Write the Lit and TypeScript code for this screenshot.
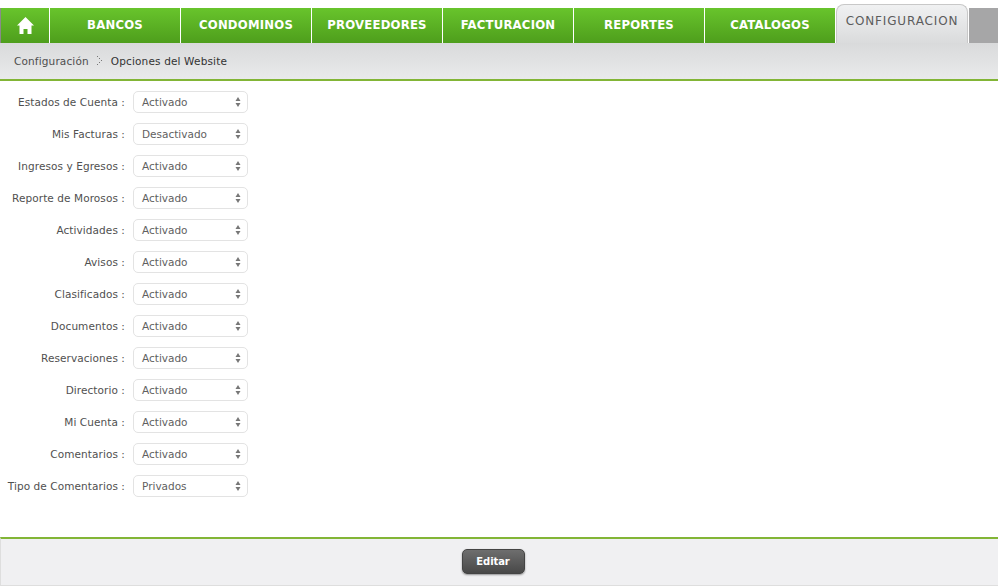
import { LitElement, html, css } from "lit";
import { customElement } from "lit/decorators.js";

const tabs = ["BANCOS", "CONDOMINOS", "PROVEEDORES", "FACTURACION", "REPORTES", "CATALOGOS"];
const rows: [string, string][] = [
  ["Estados de Cuenta", "Activado"],
  ["Mis Facturas", "Desactivado"],
  ["Ingresos y Egresos", "Activado"],
  ["Reporte de Morosos", "Activado"],
  ["Actividades", "Activado"],
  ["Avisos", "Activado"],
  ["Clasificados", "Activado"],
  ["Documentos", "Activado"],
  ["Reservaciones", "Activado"],
  ["Directorio", "Activado"],
  ["Mi Cuenta", "Activado"],
  ["Comentarios", "Activado"],
  ["Tipo de Comentarios", "Privados"],
];

@customElement("app-root")
export class AppRoot extends LitElement {
  static styles = css`
    :host { display: block; width: 998px; height: 586px; overflow: hidden; background: #fff;
      font-family: "DejaVu Sans", sans-serif; font-size: 10.5px; color: #4a4a4a; }
    .nav { display: flex; height: 39px; padding-top: 4px; box-sizing: content-box; align-items: flex-end; }
    .tab { box-sizing: border-box; height: 35px; width: 131px; display: flex; align-items: center; justify-content: center;
      background: linear-gradient(#68c42c, #4e9e1c); color: #fff; font-weight: 700; font-size: 11.7px; letter-spacing: 0.2px;
      border-left: 1px solid #fff; flex: none; padding-bottom: 2px; }
    .home { width: 49px; border-left: 1px solid #8a8a8a; padding-bottom: 0; }
    .active { width: 132px; height: 39px; margin-left: 1px; border: 1px solid #c8c8c8; border-bottom: none; border-radius: 8px 8px 0 0;
      background: linear-gradient(#f0f1f2, #dadbdc); color: #5c5c5c; font-weight: 400; font-size: 12px; letter-spacing: 0.85px; align-items: flex-start; padding-top: 9px; padding-bottom: 0; }
    .rest { flex: 1; height: 35px; background: #a6a6a7; margin-left: 1px; }
    .crumbs { box-sizing: border-box; height: 38px; display: flex; align-items: center; padding-left: 14px; gap: 8px;
      background: linear-gradient(#d9dadb, #e9eaeb); border-bottom: 2px solid #82b536; color: #333; letter-spacing: 0.15px; }
    .crumbs .first { color: #4e4e4e; }
    .form { display: flex; flex-direction: column; height: 456px; padding-top: 10px; box-sizing: border-box; }
    .row { display: flex; align-items: center; height: 22px; margin-bottom: 10px; }
    .label { width: 125px; text-align: right; white-space: nowrap; margin-right: 8px; flex: none; letter-spacing: 0.08px; color: #505050; }
    .select { box-sizing: border-box; width: 115px; height: 22px; border: 1px solid #e3e3e3; border-radius: 5px; padding-left: 8px;
      display: flex; align-items: center; justify-content: space-between; padding-right: 6px; color: #5f5f5f; background: #fff; }
    .footer { box-sizing: border-box; height: 49px; background: #f0f0f2; border-top: 2px solid #82b536; border-bottom: 1px solid #dedede;
      border-left: 1px solid #dedede; display: flex; justify-content: center; padding-top: 10px; padding-right: 13px; }
    .btn { box-sizing: border-box; width: 63px; height: 25px; border-radius: 5px; border: 1px solid #444; background: linear-gradient(#6e6e6e, #484848);
      color: #fff; font: 700 10px "DejaVu Sans", sans-serif; letter-spacing: -0.1px; box-shadow: 0 1px 2px rgba(0,0,0,.4); padding: 0; }
  `;

  render() {
    return html`
      <div class="nav">
        <div class="tab home">
          <svg width="17" height="17" viewBox="0 0 17 17"><path fill="#fff" d="M8.500 0 0 8.500h2.500V17h4v-5h4v5h4V8.500H17Z"/></svg>
        </div>
        ${tabs.map((t) => html`<div class="tab">${t}</div>`)}
        <div class="tab active">CONFIGURACION</div>
        <div class="rest"></div>
      </div>
      <div class="crumbs">
        <span class="first">Configuración</span>
        <svg width="6" height="10" viewBox="0 0 6 10"><g fill="#777"><rect x="0" y="0" width="1" height="1"/><rect x="2" y="2" width="1" height="1"/><rect x="4" y="4" width="1" height="1"/><rect x="2" y="6" width="1" height="1"/><rect x="0" y="8" width="1" height="1"/></g></svg>
        <span>Opciones del Website</span>
      </div>
      <div class="form">
        ${rows.map(([l, v]) => html`
          <div class="row">
            <div class="label">${l} :</div>
            <div class="select"><span>${v}</span>
              <svg width="6" height="10" viewBox="0 0 6 10"><path fill="#777" d="M3 0 5.500 4H.5ZM3 10 .5 6h5Z"/></svg>
            </div>
          </div>`)}
      </div>
      <div class="footer"><button class="btn">Editar</button></div>
    `;
  }
}
